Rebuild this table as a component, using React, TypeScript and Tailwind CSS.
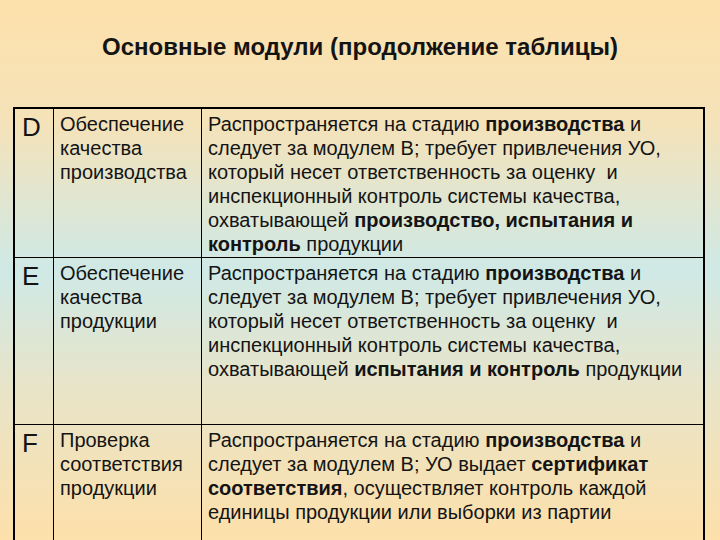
import React from 'react';

type Row = { letter: string; name: React.ReactNode; text: React.ReactNode; h: string };

const ROWS: Row[] = [
  {
    letter: 'D',
    h: 'h-[148px]',
    name: <>Обеспечение<br />качества<br />производства</>,
    text: (
      <>
        Распространяется на стадию <b>производства</b> и<br />
        следует за модулем В; требует привлечения УО,<br />
        который несет ответственность за оценку&nbsp; и<br />
        инспекционный контроль системы качества,<br />
        охватывающей <b>производство, испытания и</b><br />
        <b>контроль</b> продукции
      </>
    ),
  },
  {
    letter: 'E',
    h: 'h-[167px]',
    name: <>Обеспечение<br />качества<br />продукции</>,
    text: (
      <>
        Распространяется на стадию <b>производства</b> и<br />
        следует за модулем В; требует привлечения УО,<br />
        который несет ответственность за оценку&nbsp; и<br />
        инспекционный контроль системы качества,<br />
        охватывающей <b>испытания и контроль</b> продукции
      </>
    ),
  },
  {
    letter: 'F',
    h: 'h-[130px]',
    name: <>Проверка<br />соответствия<br />продукции</>,
    text: (
      <>
        Распространяется на стадию <b>производства</b> и<br />
        следует за модулем В; УО выдает <b>сертификат</b><br />
        <b>соответствия</b>, осуществляет контроль каждой<br />
        единицы продукции или выборки из партии
      </>
    ),
  },
];

export default function App() {
  return (
    <div className="w-[720px] h-[540px] overflow-hidden bg-[linear-gradient(180deg,#fde1ac_0%,#f5e2b8_22%,#cfe9e6_50%,#e8e4c8_72%,#fde0aa_100%)] text-[#141414] font-['Liberation_Sans',Arial,sans-serif]">
      <h1 className="pt-[33px] h-[107px] text-center text-[24px] leading-[28px] font-bold">
        Основные модули (продолжение таблицы)
      </h1>
      <div className="ml-[13px] w-[692px] border-2 border-black">
        {ROWS.map((r, i) => (
          <div key={r.letter} className={`flex ${r.h} ${i > 0 ? 'border-t border-black' : ''}`}>
            <div className="w-[39px] shrink-0 border-r border-black pl-[7px] pt-[3px] text-[26px] leading-[30px]">{r.letter}</div>
            <div className="w-[148px] shrink-0 border-r border-black pl-[6px] pt-[3px] text-[20px] leading-[24px]">{r.name}</div>
            <div className="flex-1 pl-[6px] pt-[3px] text-[20px] leading-[24px] whitespace-nowrap">{r.text}</div>
          </div>
        ))}
      </div>
    </div>
  );
}
